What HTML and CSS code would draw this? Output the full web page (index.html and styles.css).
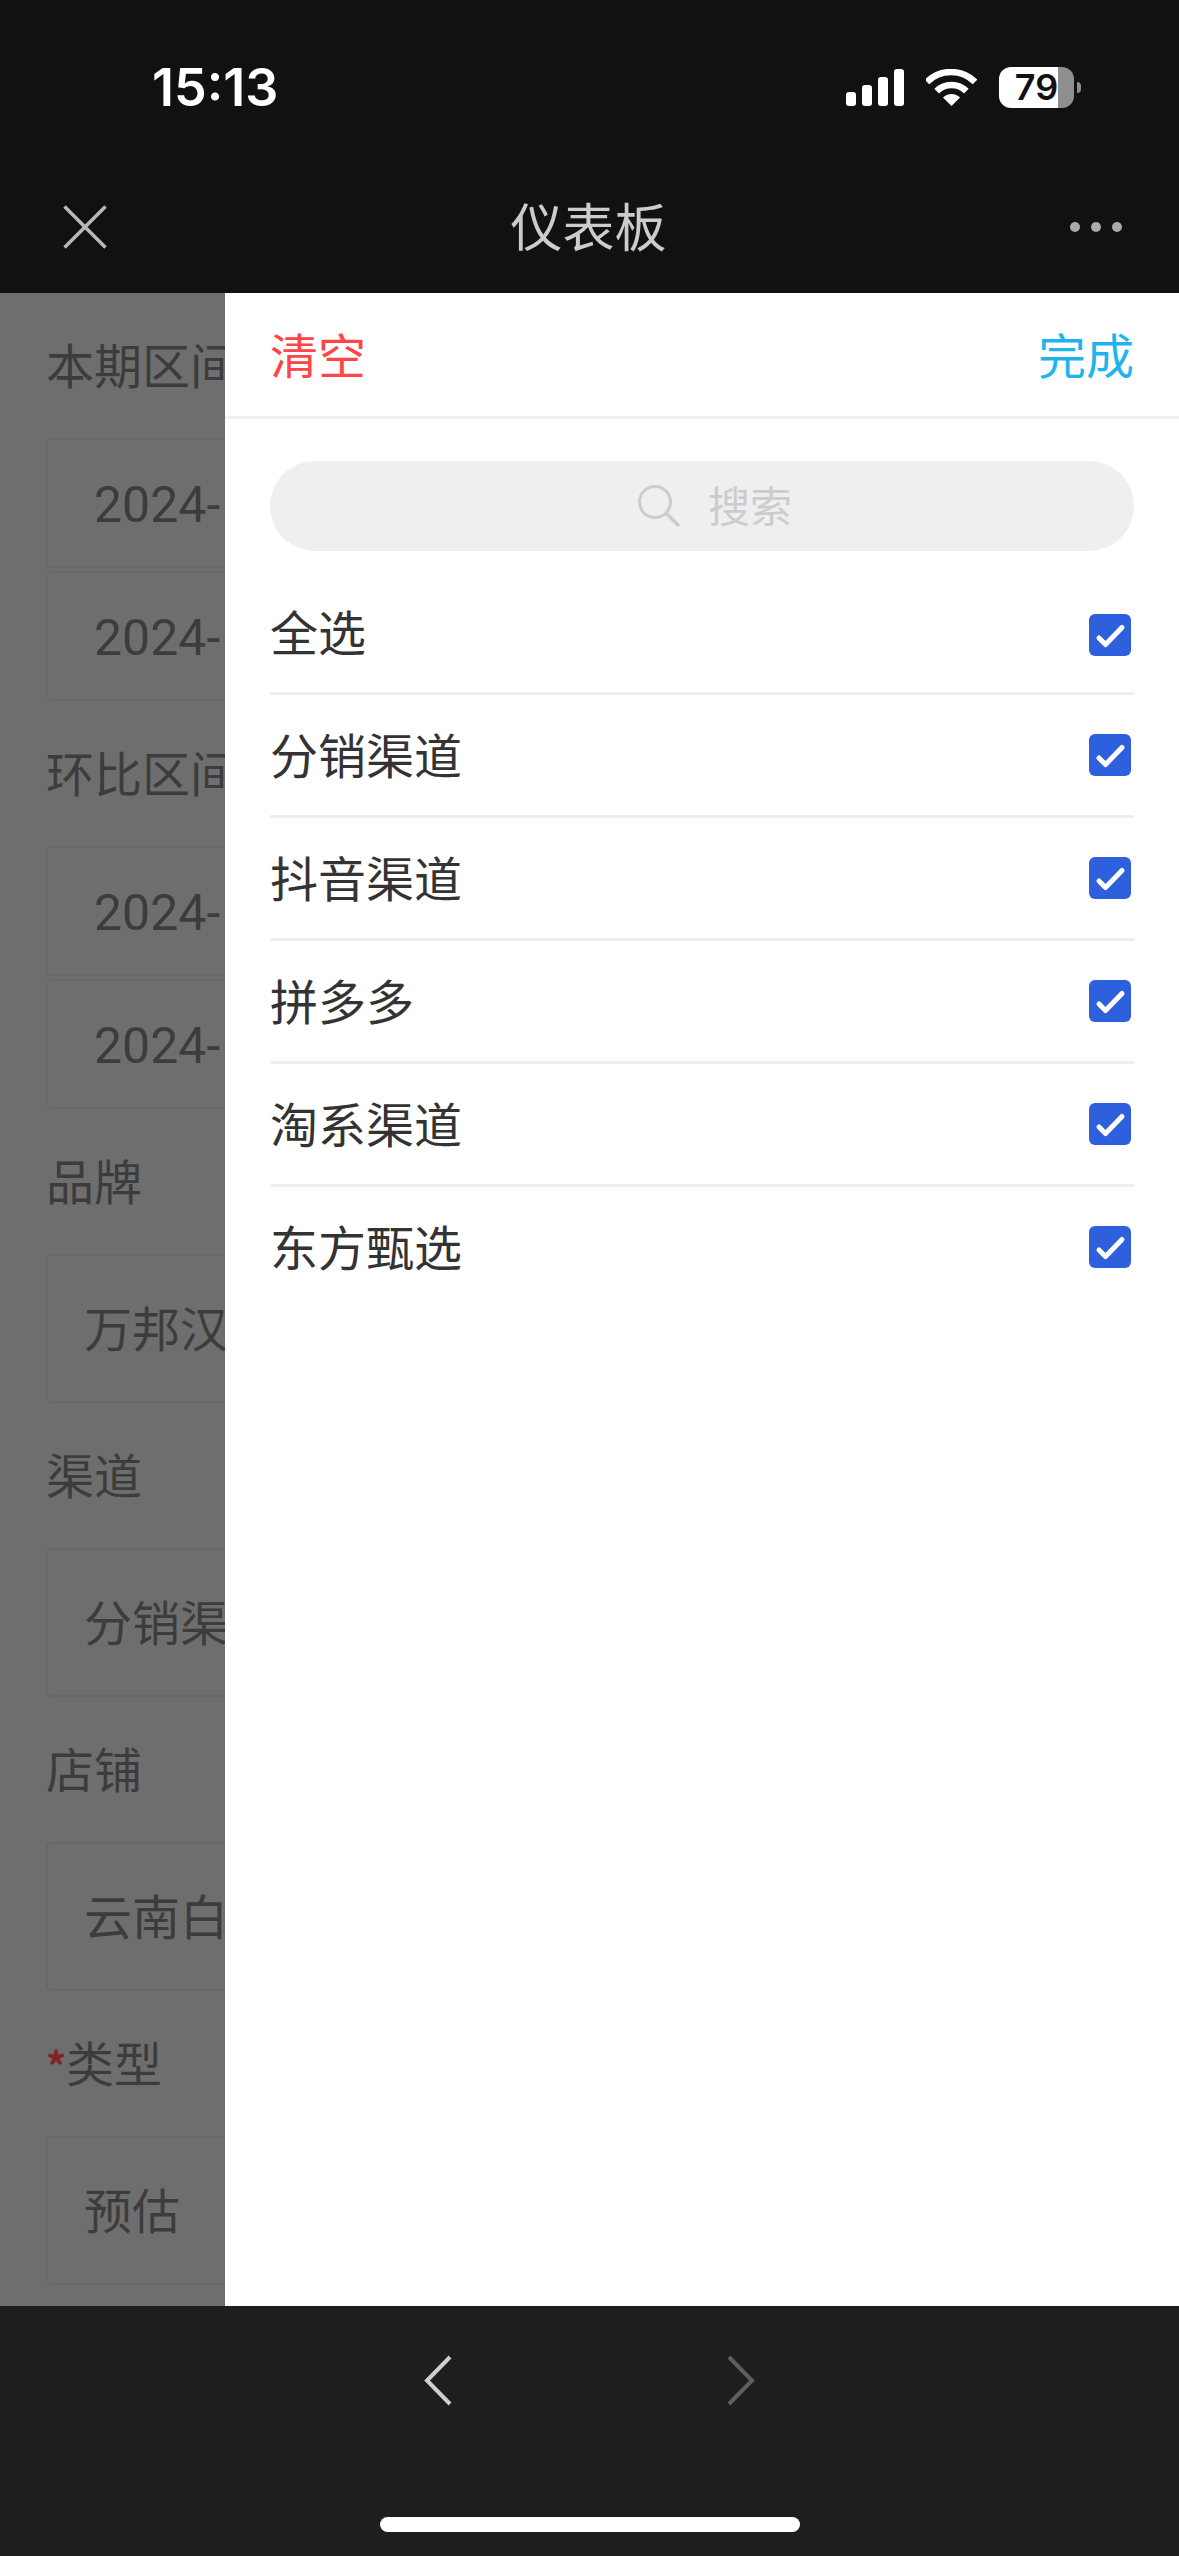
FILE: index.html
```html
<!DOCTYPE html>
<html lang="zh-CN">
<head>
    <meta charset="UTF-8">
    <meta name="viewport" content="width=device-width, initial-scale=1.0">
    <title>仪表板</title>
    <link rel="stylesheet" href="styles.css">
</head>
<body>
    <div class="status-bar">
        <div class="time">15:13</div>
        <div class="status-icons">
            <div class="signal">
                <span class="bar bar-1"></span>
                <span class="bar bar-2"></span>
                <span class="bar bar-3"></span>
                <span class="bar bar-4"></span>
            </div>
            <svg class="wifi" viewBox="0 0 51 37" width="51" height="37">
                <path d="M0.96 12.96A34 34 0 0 1 49.04 12.96" fill="none" stroke="#fff" stroke-width="6.5"/>
                <path d="M10.65 22.15A21 21 0 0 1 40.35 22.15" fill="none" stroke="#fff" stroke-width="6.5"/>
                <path d="M25.5 37L17 28.5A12 12 0 0 1 34 28.5Z" fill="#fff"/>
            </svg>
            <div class="battery">
                <div class="battery-body">79</div>
                <div class="battery-nub"></div>
            </div>
        </div>
    </div>

    <div class="nav-bar">
        <svg class="nav-close" viewBox="0 0 44 44" width="44" height="44">
            <path d="M1.5 1.5L42.5 42.5M42.5 1.5L1.5 42.5" stroke="#b8b8b8" stroke-width="3.5" fill="none"/>
        </svg>
        <div class="nav-title">仪表板</div>
        <div class="nav-more">
            <span class="dot"></span>
            <span class="dot"></span>
            <span class="dot"></span>
        </div>
    </div>

    <div class="main">
        <!-- form behind the filter drawer -->
        <div class="form">
            <div class="field">
                <div class="field-label">本期区间</div>
                <div class="date-box">2024-</div>
                <div class="date-box">2024-</div>
            </div>
            <div class="field">
                <div class="field-label">环比区间</div>
                <div class="date-box">2024-</div>
                <div class="date-box">2024-</div>
            </div>
            <div class="field">
                <div class="field-label">品牌</div>
                <div class="select-box">万邦汉</div>
            </div>
            <div class="field">
                <div class="field-label">渠道</div>
                <div class="select-box">分销渠</div>
            </div>
            <div class="field">
                <div class="field-label">店铺</div>
                <div class="select-box">云南白</div>
            </div>
            <div class="field">
                <div class="field-label"><span class="required">*</span>类型</div>
                <div class="select-box">预估</div>
            </div>
        </div>

        <div class="drawer">
            <div class="drawer-header">
                <div class="btn-clear">清空</div>
                <div class="btn-done">完成</div>
            </div>
            <div class="search-wrap">
                <div class="search">
                    <svg class="search-icon" viewBox="0 0 42 42" width="42" height="42">
                        <circle cx="17" cy="17" r="15.5" fill="none" stroke="#ccc" stroke-width="3"/>
                        <path d="M28 28L41 41" stroke="#ccc" stroke-width="3.5" fill="none"/>
                    </svg>
                    <span class="search-text">搜索</span>
                </div>
            </div>
            <div class="option-list">
                <div class="option"><span class="option-name">全选</span><svg class="check" viewBox="0 0 42 42" width="42" height="42"><rect width="42" height="42" rx="6" fill="#2e5fdc"/><path d="M10 24L16.5 30.5L33 13.5" fill="none" stroke="#fff" stroke-width="5" stroke-linecap="round" stroke-linejoin="round"/></svg></div>
                <div class="option"><span class="option-name">分销渠道</span><svg class="check" viewBox="0 0 42 42" width="42" height="42"><rect width="42" height="42" rx="6" fill="#2e5fdc"/><path d="M10 24L16.5 30.5L33 13.5" fill="none" stroke="#fff" stroke-width="5" stroke-linecap="round" stroke-linejoin="round"/></svg></div>
                <div class="option"><span class="option-name">抖音渠道</span><svg class="check" viewBox="0 0 42 42" width="42" height="42"><rect width="42" height="42" rx="6" fill="#2e5fdc"/><path d="M10 24L16.5 30.5L33 13.5" fill="none" stroke="#fff" stroke-width="5" stroke-linecap="round" stroke-linejoin="round"/></svg></div>
                <div class="option"><span class="option-name">拼多多</span><svg class="check" viewBox="0 0 42 42" width="42" height="42"><rect width="42" height="42" rx="6" fill="#2e5fdc"/><path d="M10 24L16.5 30.5L33 13.5" fill="none" stroke="#fff" stroke-width="5" stroke-linecap="round" stroke-linejoin="round"/></svg></div>
                <div class="option"><span class="option-name">淘系渠道</span><svg class="check" viewBox="0 0 42 42" width="42" height="42"><rect width="42" height="42" rx="6" fill="#2e5fdc"/><path d="M10 24L16.5 30.5L33 13.5" fill="none" stroke="#fff" stroke-width="5" stroke-linecap="round" stroke-linejoin="round"/></svg></div>
                <div class="option"><span class="option-name">东方甄选</span><svg class="check" viewBox="0 0 42 42" width="42" height="42"><rect width="42" height="42" rx="6" fill="#2e5fdc"/><path d="M10 24L16.5 30.5L33 13.5" fill="none" stroke="#fff" stroke-width="5" stroke-linecap="round" stroke-linejoin="round"/></svg></div>
            </div>
        </div>
    </div>

    <div class="toolbar">
        <div class="toolbar-arrows">
            <svg viewBox="0 0 28 51" width="28" height="51"><path d="M26 2L3 25.5L26 49" fill="none" stroke="#cfcfcf" stroke-width="4"/></svg>
            <svg viewBox="0 0 28 51" width="28" height="51"><path d="M2 2L25 25.5L2 49" fill="none" stroke="#5e5e5e" stroke-width="4"/></svg>
        </div>
        <div class="home-bar"></div>
    </div>
</body>
</html>
```

FILE: styles.css
```css
* {
    margin: 0;
    padding: 0;
    box-sizing: border-box;
    font-family: "Noto Sans CJK SC", "Noto Sans", sans-serif;
}

body {
    display: flex;
    flex-direction: column;
    width: 1179px;
    height: 2556px;
    overflow: hidden;
    background-color: #111111;
}

/* status bar */
.status-bar {
    display: flex;
    justify-content: space-between;
    align-items: flex-start;
    height: 160px;
    padding: 67px 98px 0 152px;
    background-color: #111111;
}

.time {
    font-family: Inter, sans-serif;
    font-size: 52px;
    font-weight: 600;
    line-height: 42px;
    color: #ffffff;
}

.status-icons {
    display: flex;
    align-items: center;
    gap: 22px;
}

.signal {
    display: flex;
    align-items: flex-end;
    gap: 6px;
    height: 37px;
}

.bar {
    width: 10px;
    border-radius: 3px;
    background-color: #ffffff;
}

.bar-1 { height: 14px; }
.bar-2 { height: 21px; }
.bar-3 { height: 29px; }
.bar-4 { height: 37px; }

.battery {
    display: flex;
    align-items: center;
}

.battery-body {
    width: 75px;
    height: 41px;
    border-radius: 12px;
    background: linear-gradient(to right, #ffffff 59px, #8e8e8e 59px);
    font-family: Inter, sans-serif;
    font-size: 36px;
    font-weight: 600;
    line-height: 41px;
    text-align: center;
    color: #111111;
}

.battery-nub {
    width: 4px;
    height: 11px;
    margin-left: 3px;
    border-radius: 0 6px 6px 0;
    background-color: #8e8e8e;
}

/* title bar */
.nav-bar {
    display: flex;
    justify-content: space-between;
    align-items: center;
    height: 133px;
    padding: 0 57px 0 63px;
    background-color: #111111;
}

.nav-title {
    margin-bottom: 3px;
    font-size: 52px;
    line-height: 60px;
    color: #cccccc;
}

.nav-more {
    display: flex;
    gap: 11px;
}

.dot {
    width: 10px;
    height: 10px;
    border-radius: 50%;
    background-color: #aaaaaa;
}

/* form under the drawer */
.main {
    position: relative;
    flex: 1;
    overflow: hidden;
    background-color: #6e6e6e;
}

.form {
    padding: 43px 45px 0 46px;
}

.field {
    margin-bottom: 43px;
}

.field-label {
    height: 60px;
    margin-bottom: 42px;
    font-size: 48px;
    line-height: 55px;
    color: #3c3c3c;
}

.required {
    display: inline-block;
    width: 20px;
    font-size: 40px;
    font-weight: 700;
    color: #7f2424;
}

.date-box,
.select-box {
    display: flex;
    align-items: center;
    border: 2px solid #686868;
    border-radius: 6px;
    color: #3c3c3c;
}

.date-box {
    height: 130px;
    padding: 4px 0 0 46px;
    font-family: Roboto, sans-serif;
    font-size: 50px;
}

.date-box + .date-box {
    margin-top: 3px;
}

.select-box {
    height: 149px;
    padding: 0 0 5px 36px;
    font-size: 48px;
}

/* filter drawer */
.drawer {
    position: absolute;
    top: 0;
    right: 0;
    bottom: 0;
    left: 225px;
    background-color: #ffffff;
}

.drawer-header {
    display: flex;
    justify-content: space-between;
    align-items: center;
    height: 126px;
    padding: 0 45px 4px;
    border-bottom: 3px solid #f0f0f0;
    font-size: 48px;
}

.btn-clear {
    color: #ff4545;
}

.btn-done {
    color: #1fb5ec;
}

.search-wrap {
    padding: 42px 45px 21px;
}

.search {
    display: flex;
    justify-content: center;
    align-items: center;
    gap: 28px;
    height: 90px;
    padding-left: 26px;
    border-radius: 45px;
    background-color: #efefef;
    font-size: 42px;
    color: #cccccc;
}

.search-text {
    margin-bottom: 5px;
}

.option-list {
    padding: 0 45px;
}

.option {
    display: flex;
    justify-content: space-between;
    align-items: center;
    height: 123px;
    padding-right: 3px;
    border-bottom: 3px solid #eeeeee;
    font-size: 48px;
    color: #333333;
}

.option:last-child {
    border-bottom-color: transparent;
}

.option-name {
    margin-bottom: 5px;
}

.option:first-child .check {
    margin-top: 6px;
}

/* bottom toolbar */
.toolbar {
    display: flex;
    flex-direction: column;
    height: 250px;
    padding-top: 49px;
    background-color: #1e1e1e;
}

.toolbar-arrows {
    display: flex;
    gap: 275px;
    padding-left: 424px;
}

.home-bar {
    width: 420px;
    height: 15px;
    margin: 111px auto 0;
    border-radius: 8px;
    background-color: #ffffff;
}
```
